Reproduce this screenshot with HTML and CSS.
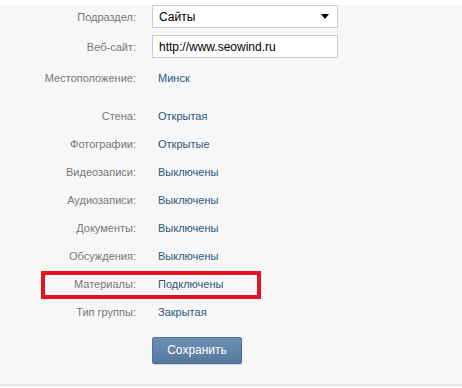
FILE: index.html
```html
<!DOCTYPE html>
<html>
	<head>
		<meta charset="UTF-8">
		<title>Настройки группы</title>
		<link rel="stylesheet" href="styles.css">
	</head>
	<body>
		<div class="page">
			<div class="form">
				<div class="row row-field first">
					<div class="label">Подраздел:</div>
					<div class="select">
						<span>Сайты</span>
						<svg class="arrow" width="8" height="5" viewBox="0 0 8 5"><path d="M0 0h8L4 5z" fill="#000"/></svg>
					</div>
				</div>
				<div class="row row-field">
					<div class="label">Веб-сайт:</div>
					<div class="input">http://www.seowind.ru</div>
				</div>
				<div class="row place">
					<div class="label">Местоположение:</div>
					<div class="value">Минск</div>
				</div>
				<div class="group">
					<div class="row">
						<div class="label">Стена:</div>
						<div class="value">Открытая</div>
					</div>
					<div class="row">
						<div class="label">Фотографии:</div>
						<div class="value">Открытые</div>
					</div>
					<div class="row">
						<div class="label">Видеозаписи:</div>
						<div class="value">Выключены</div>
					</div>
					<div class="row">
						<div class="label">Аудиозаписи:</div>
						<div class="value">Выключены</div>
					</div>
					<div class="row">
						<div class="label">Документы:</div>
						<div class="value">Выключены</div>
					</div>
					<div class="row">
						<div class="label">Обсуждения:</div>
						<div class="value">Выключены</div>
					</div>
					<div class="row marked">
						<div class="label">Материалы:</div>
						<div class="value">Подключены</div>
					</div>
					<div class="row">
						<div class="label">Тип группы:</div>
						<div class="value">Закрытая</div>
					</div>
				</div>
				<div class="buttons">
					<div class="button">Сохранить</div>
				</div>
			</div>
		</div>
	</body>
</html>
```

FILE: styles.css
```css
*,
*::before,
*::after{
	margin: 0;
	padding: 0;
	box-sizing: border-box;
}
body{
	background: #fff;
	font-family: "Liberation Sans", Arial, sans-serif;
	font-size: 11px;
}
.page{
	background: #f7f7f7;
	border-bottom: 2px solid #e6e6e6;
	height: 381px;
}
.form{
	height: 379px;
}
.row{
	display: flex;
	align-items: center;
	height: 28px;
	position: relative;
}
.row .label{
	width: 136px;
	text-align: right;
	color: #777;
	flex: none;
}
.row .value{
	margin-left: 22px;
	color: #2b587a;
}
.row-field{
	height: 23px;
	margin-top: 7px;
}
.row-field.first{
	margin-top: 5px;
}
.select,
.input{
	margin-left: 16px;
	width: 186px;
	height: 23px;
	border: 1px solid #c9cdd2;
	background: #fff;
	color: #000;
	font-size: 12px;
	padding: 0 6px;
	display: flex;
	align-items: center;
}
.select span{
	flex: 1;
}
.select .arrow{
	margin-right: 2px;
}
.place{
	margin-top: 6px;
}
.group{
	margin-top: 10px;
}
.marked::after{
	content: "";
	position: absolute;
	left: 41px;
	top: 1px;
	width: 220px;
	height: 28px;
	border: 4px solid #e3131f;
}
.buttons{
	padding: 11px 0 0 152px;
}
.button{
	width: 90px;
	height: 27px;
	line-height: 25px;
	text-align: center;
	color: #fff;
	font-size: 12px;
	background: linear-gradient(#6d90b6, #5578a0);
	border: 1px solid #4d7098;
	border-radius: 2px;
	box-shadow: 0 1px 1px rgba(0,0,0,.15);
}
```
